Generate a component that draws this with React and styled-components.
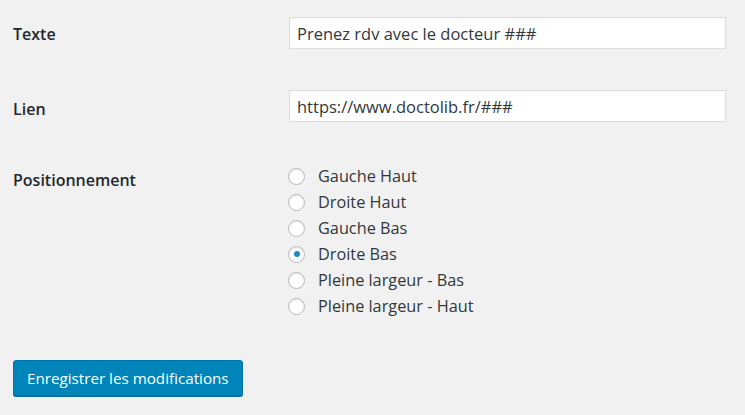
import React from "react";
import styled, { createGlobalStyle } from "styled-components";

const Global = createGlobalStyle`
  html, body { margin: 0; padding: 0; background: #f1f1f1; }
  body { font-family: "Open Sans", "Noto Sans", sans-serif; color: #23282d; }
  * { box-sizing: border-box; }
`;

const Form = styled.form`
  display: flex;
  flex-direction: column;
  padding: 17px 0 0 13px;
  width: 745px;
  height: 415px;
`;

const Row = styled.div`
  display: grid;
  grid-template-columns: 276px 437px;
  align-items: start;
  margin-bottom: ${(p) => p.$gap}px;
`;

const Label = styled.label`
  font-size: 16px;
  font-weight: 600;
  line-height: 22px;
  padding-top: ${(p) => p.$top}px;
  color: #23282d;
`;

const TextInput = styled.input`
  width: 437px;
  height: 32px;
  border: 1px solid #dddddd;
  background: #fff;
  box-shadow: inset 0 1px 2px rgba(0, 0, 0, 0.04);
  font-family: inherit;
  font-size: 16.5px;
  color: #32373c;
  padding: 0 7px;
  outline: none;
`;

const RadioList = styled.div`
  display: flex;
  flex-direction: column;
`;

const RadioRow = styled.label`
  display: flex;
  align-items: center;
  height: 26px;
  font-size: 16.3px;
  color: #32373c;
  gap: 13px;
`;

const Radio = styled.span`
  width: 17px;
  height: 17px;
  margin-left: -1px;
  border-radius: 50%;
  border: 1px solid #b4b9be;
  background: #fff;
  box-shadow: inset 0 1px 2px rgba(0, 0, 0, 0.1);
  display: flex;
  align-items: center;
  justify-content: center;
  flex: none;
  &::after {
    content: "";
    display: ${(p) => (p.$checked ? "block" : "none")};
    width: 6px;
    height: 6px;
    border-radius: 50%;
    background: #1e8cbe;
  }
`;

const Button = styled.button`
  align-self: flex-start;
  height: 36px;
  padding: 0 13px;
  border: 1px solid #0073aa;
  border-radius: 3px;
  background: #0085ba;
  box-shadow: 0 1px 0 #006799;
  color: #fff;
  font-family: inherit;
  font-size: 15.2px;
  cursor: pointer;
`;

const options = [
  "Gauche Haut",
  "Droite Haut",
  "Gauche Bas",
  "Droite Bas",
  "Pleine largeur - Bas",
  "Pleine largeur - Haut",
];

export default function App() {
  return (
    <>
      <Global />
      <Form onSubmit={(e) => e.preventDefault()}>
        <Row $gap={41}>
          <Label $top={6}>Texte</Label>
          <TextInput defaultValue="Prenez rdv avec le docteur ###" />
        </Row>
        <Row $gap={41}>
          <Label $top={8}>Lien</Label>
          <TextInput defaultValue="https://www.doctolib.fr/###" />
        </Row>
        <Row $gap={41}>
          <Label $top={6}>Positionnement</Label>
          <RadioList>
            {options.map((o) => (
              <RadioRow key={o}>
                <Radio $checked={o === "Droite Bas"} />
                {o}
              </RadioRow>
            ))}
          </RadioList>
        </Row>
        <Button type="submit">Enregistrer les modifications</Button>
      </Form>
    </>
  );
}
